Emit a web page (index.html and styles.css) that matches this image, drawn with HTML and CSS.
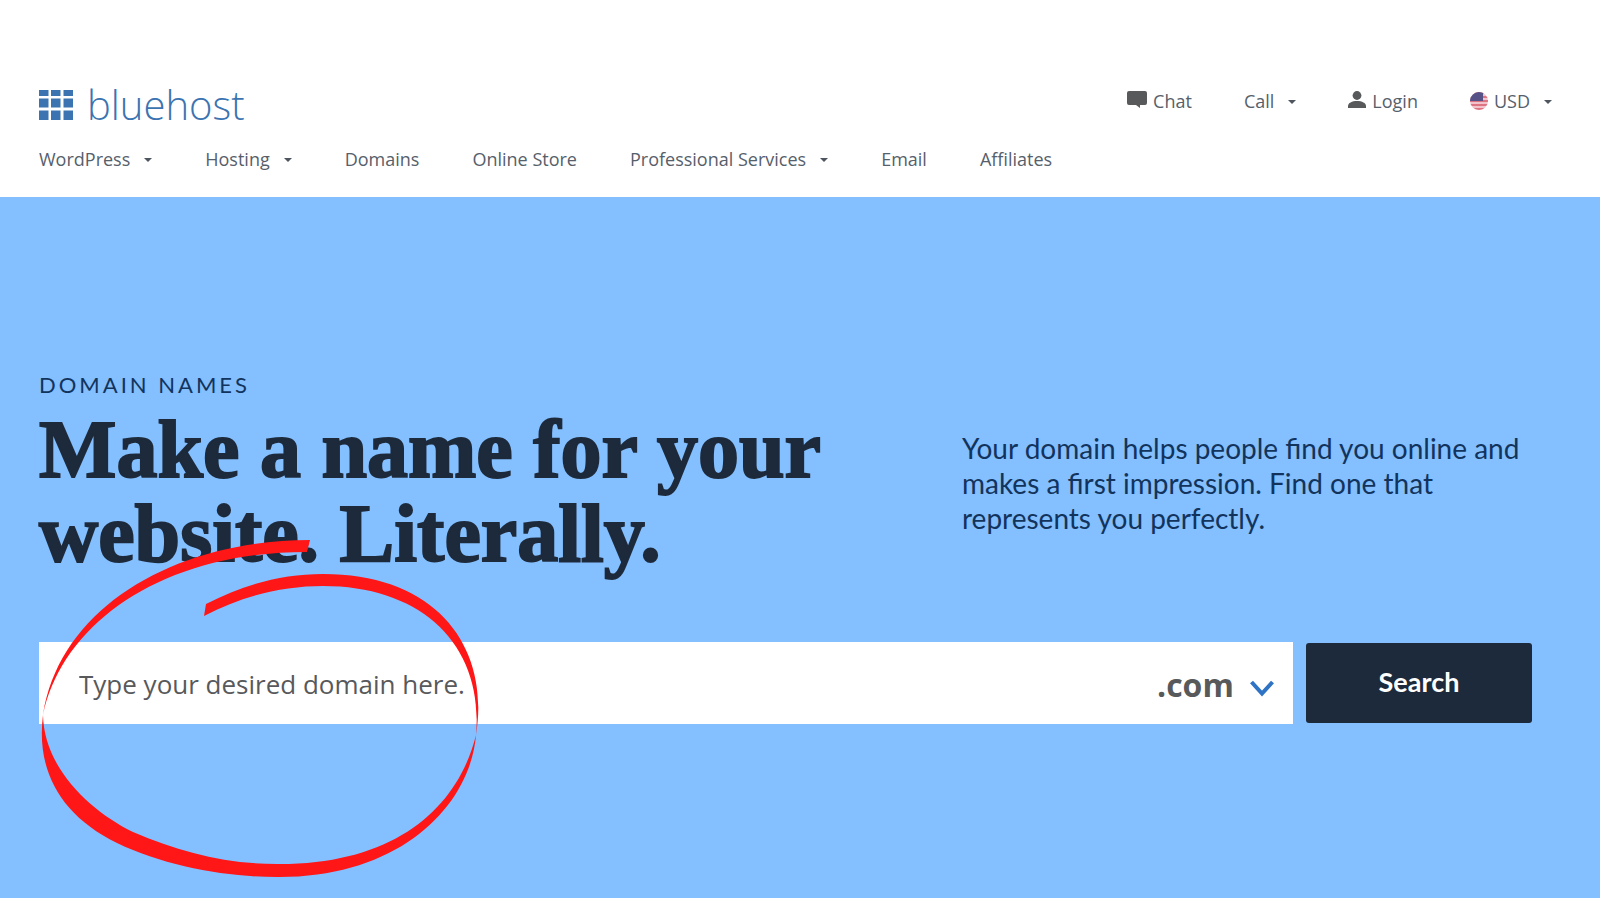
FILE: index.html
```html
<!DOCTYPE html>
<html lang="en">
<head>
    <meta charset="UTF-8">
    <title>Domain Names | Bluehost</title>
    <link rel="stylesheet" href="styles.css">
</head>
<body>
    <header class="header">
        <div class="header-top">
            <a class="logo" href="#">
                <svg class="logo-grid" width="34" height="30" viewBox="0 0 34 30" fill="#3b74b1" aria-hidden="true">
                    <path d="M0 0h9.500v6H0zM12 0h9.500v6H12zM24.500 0H34v6h-9.500zM0 8.500h9.500v9H0zM12 8.500h9.500v9H12zM24.500 8.500H34v9h-9.500zM0 20.500h9.500V30H0zM12 20.500h9.500V30H12zM24.500 20.500H34V30h-9.500z"/>
                </svg>
                <span>bluehost</span>
            </a>
            <div class="account">
                <a class="with-icon" href="#">
                    <svg width="20" height="17" viewBox="0 0 20 17" fill="#58595b" aria-hidden="true">
                        <path d="M2 0h16q2 0 2 2v10q0 2-2 2h-5v3l-4-3H2q-2 0-2-2V2q0-2 2-2z"/>
                    </svg>
                    Chat
                </a>
                <button class="menu">Call <span class="caret"></span></button>
                <a class="with-icon" href="#">
                    <svg width="18" height="17" viewBox="0 0 18 17" fill="#58595b" aria-hidden="true">
                        <circle cx="9" cy="4.500" r="4.400"/>
                        <path d="M0 17v-2c0-3 4-5 9-5s9 2 9 5v2z"/>
                    </svg>
                    Login
                </a>
                <button class="menu with-icon">
                    <svg class="flag" width="18" height="18" viewBox="0 0 18 18" aria-hidden="true">
                        <clipPath id="flag"><circle cx="9" cy="9" r="9"/></clipPath>
                        <g clip-path="url(#flag)">
                            <path fill="#f3c3cb" d="M0 0h18v18H0z"/>
                            <path fill="#dd7482" d="M0 0h18v2H0zM0 4h18v2H0zM0 8h18v2H0zM0 12h18v2H0zM0 16h18v2H0z"/>
                            <path fill="#565288" d="M0 0h13v9H0z"/>
                        </g>
                    </svg>
                    USD <span class="caret"></span>
                </button>
            </div>
        </div>
        <nav class="nav">
            <button class="menu">WordPress <span class="caret"></span></button>
            <button class="menu">Hosting <span class="caret"></span></button>
            <a href="#">Domains</a>
            <a href="#">Online Store</a>
            <button class="menu">Professional Services <span class="caret"></span></button>
            <a href="#">Email</a>
            <a href="#">Affiliates</a>
        </nav>
    </header>

    <main class="hero">
        <div class="label">DOMAIN NAMES</div>
        <div class="intro">
            <h1>Make a name for your<br>website. Literally.</h1>
            <p>Your domain helps people find you online and makes a first impression. Find one that represents you perfectly.</p>
        </div>
        <form class="search">
            <div class="search-box">
                <input type="text" class="domain" placeholder="Type your desired domain here." aria-label="Domain name">
                <select class="tld" aria-label="Domain extension">
                    <option>.com</option>
                </select>
                <svg class="chevron" width="24" height="17" viewBox="0 0 24 17" fill="none" stroke="#2f74c4" stroke-width="4" aria-hidden="true">
                    <path d="M1.500 2L12 13.500 22.500 2"/>
                </svg>
            </div>
            <button type="button" class="search-button">Search</button>
        </form>

        <!-- hand-drawn circle round the domain field -->
        <svg class="marker" width="500" height="703" viewBox="0 197 500 703" fill="#ff1616" aria-hidden="true">
            <path d="M310 540C178 540 60 605 43 715C36 770 60 815 117 843C165 866 225 877 277 877C400 878 470 806 476 735C490 650 440 574 323 574C283 574 245 584 206 604L204 616C242 596 283 586 323 586C422 586 484 645 476 735C458 808 395 865 277 864C225 864 180 852 133 832C90 811 44 768 43 715C62 625 160 552 307 552Z"/>
        </svg>
    </main>
</body>
</html>
```

FILE: styles.css
```css
body {
    font-family: "Open Sans", sans-serif;
    background-color: #fff;
    margin: 0;
}

a {
    color: inherit;
    text-decoration: none;
}

button, input, select {
    font: inherit;
    color: inherit;
    margin: 0;
    padding: 0;
    border: none;
    background: none;
}

button {
    cursor: pointer;
}

.header {
    padding: 84px 48px 26px 39px;
    font-size: 18px;
    line-height: 24px;
    color: #56606b;
}

.header-top {
    display: flex;
    justify-content: space-between;
    align-items: flex-start;
}

.logo {
    display: flex;
    align-items: center;
    gap: 14px;
    height: 42px;
    font-size: 40px;
    font-weight: 300;
    color: #3b74b1;
}

.account {
    display: flex;
    gap: 52px;
    padding-top: 5px;
}

.with-icon {
    display: flex;
    align-items: center;
    gap: 6px;
}

.with-icon svg {
    margin-bottom: 4px;
}

.with-icon .flag {
    margin-bottom: 0;
}

.menu {
    display: flex;
    align-items: center;
}

.caret {
    margin: 2px 0 0 14px;
    border: 4px solid transparent;
    border-top-color: #4c5560;
    border-bottom: none;
}

.with-icon .caret {
    margin-left: 8px;
}

.nav {
    display: flex;
    gap: 53px;
    padding-top: 21px;
}

.hero {
    position: relative;
    padding: 175px 68px 174px 39px;
    background-color: #84bfff;
    color: #1d2a3b;
}

.label {
    font-family: Lato, sans-serif;
    font-size: 22px;
    line-height: 26px;
    letter-spacing: 3px;
    color: #12345c;
}

.intro {
    display: grid;
    grid-template-columns: 923fr 570fr;
    align-items: start;
}

h1 {
    margin: 10px 0 66px;
    font-family: "Liberation Serif", serif;
    font-size: 82px;
    line-height: 84px;
    font-weight: bold;
    -webkit-text-stroke: 2px #1d2a3b;
}

.intro p {
    margin: 33px 0 0;
    font-family: Lato, sans-serif;
    font-size: 28px;
    line-height: 35px;
    color: #12345c;
}

.search {
    display: flex;
    align-items: center;
    gap: 13px;
}

.search-box {
    flex: 1;
    display: flex;
    align-items: center;
    box-sizing: border-box;
    height: 82px;
    padding: 2px 19px 0 40px;
    background-color: #fff;
    color: #58595b;
}

.domain {
    flex: 1;
    height: 80px;
    font-size: 26px;
    outline: none;
}

.domain::placeholder {
    color: #58595b;
    opacity: 1;
}

.tld {
    appearance: none;
    margin-right: 16px;
    font-size: 32px;
    font-weight: bold;
}

.chevron {
    margin-top: 8px;
}

.search-button {
    width: 226px;
    height: 80px;
    padding-bottom: 4px;
    border-radius: 3px;
    background-color: #1d2a3b;
    font-family: Lato, sans-serif;
    font-size: 27px;
    font-weight: bold;
    color: #fff;
}

.marker {
    position: absolute;
    left: 0;
    top: 0;
    pointer-events: none;
}
```
